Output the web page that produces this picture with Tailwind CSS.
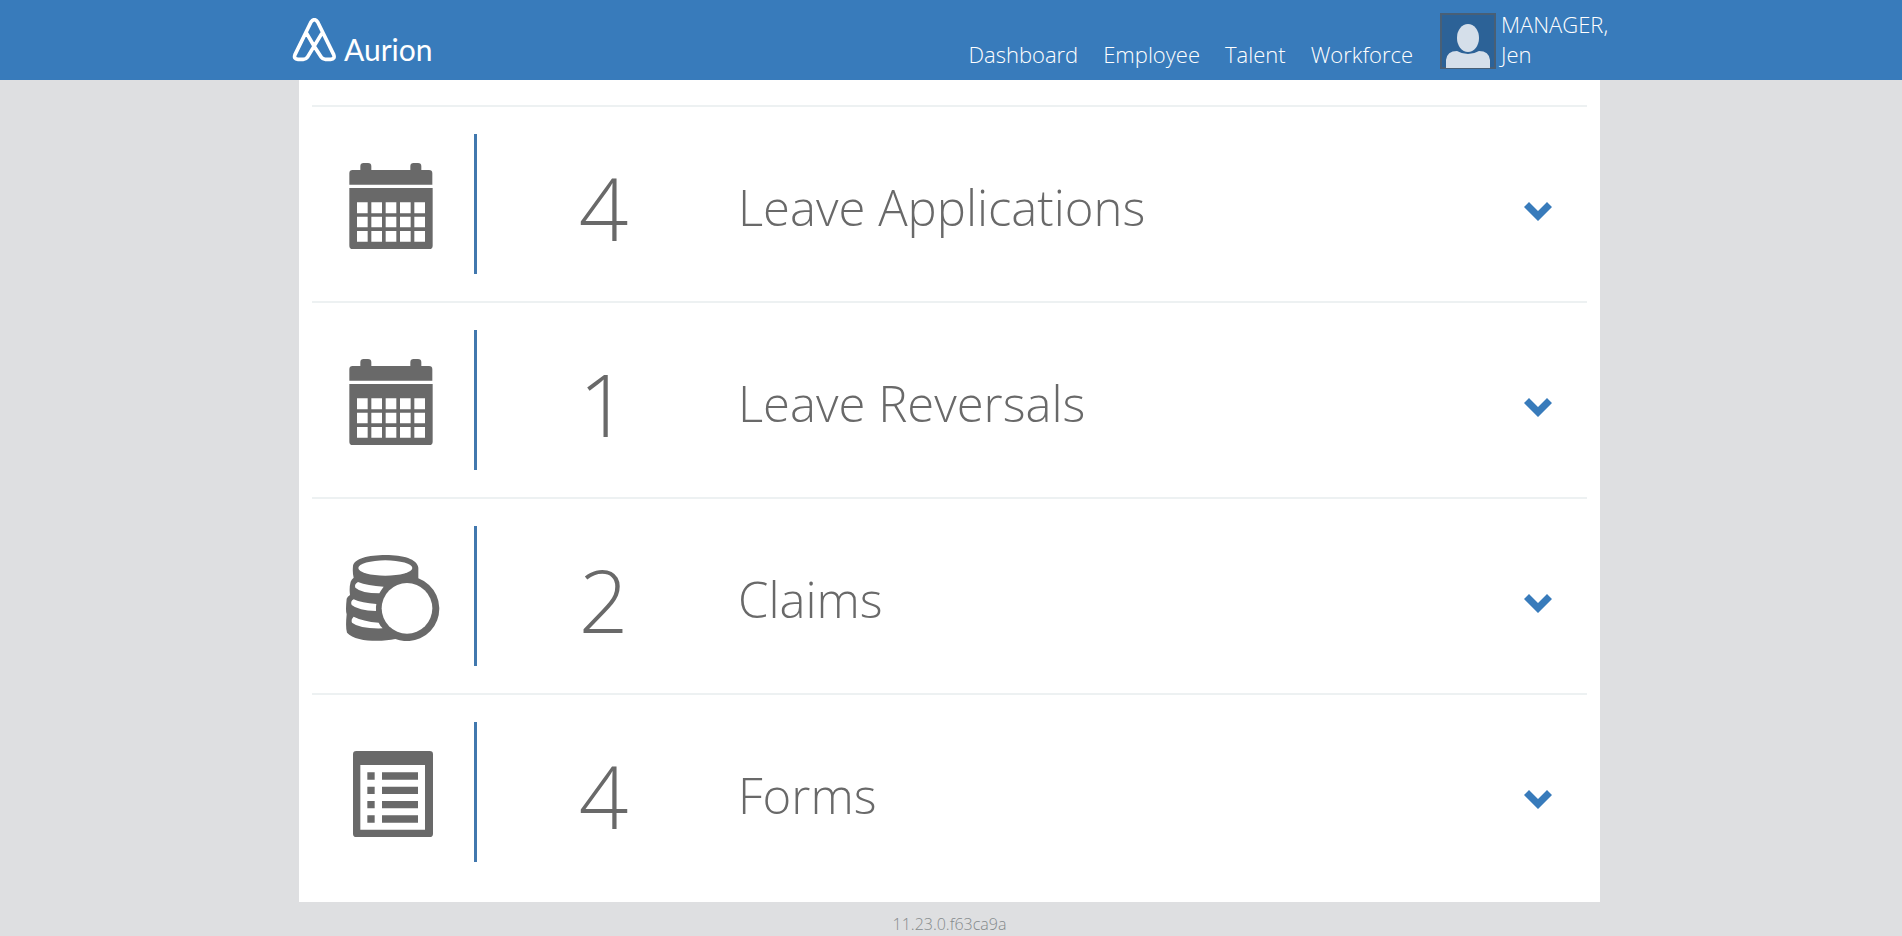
<!DOCTYPE html>
<html lang="en">
<head>
<meta charset="utf-8">
<title>Aurion</title>
<meta name="viewport" content="width=device-width, initial-scale=1">
<script src="https://cdn.jsdelivr.net/npm/@tailwindcss/browser@4"></script>
</head>
<body class="min-h-screen bg-[#dedfe1] font-['Open_Sans',sans-serif] font-light text-[#696969]">
<svg class="hidden" aria-hidden="true">
  <symbol id="calendar" viewBox="0 0 250 258">
    <path fill="currentColor" d="M0 65V31q0-10 10-10h23V10q0-10 10-10h13q10 0 10 10v11h117V10q0-10 10-10h13q10 0 10 10v11h23q10 0 10 10v34z"/>
    <path fill="currentColor" fill-rule="evenodd" d="M0 75H250V248q0 10-10 10H10q-10 0-10-10zM23 118v33h32v-33zm43 0v33h32v-33zm43 0v33h32v-33zm43 0v33h32v-33zm43 0v33h32v-33zM23 161v32h32v-32zm43 0v32h32v-32zm43 0v32h32v-32zm43 0v32h32v-32zm43 0v32h32v-32zM23 204v32h32v-32zm43 0v32h32v-32zm43 0v32h32v-32zm43 0v32h32v-32zm43 0v32h32v-32z"/>
  </symbol>
  <symbol id="chevron" viewBox="0 0 28 19">
    <path fill="currentColor" d="M5 0 14 9 23 0 28 5 14 19 0 5z"/>
  </symbol>
</svg>

<header class="bg-[#387bbb] pr-[3px] text-white">
  <div class="mx-auto flex h-20 max-w-[1315px] items-start justify-between">
    <a href="#" class="flex items-end gap-2 pt-[18px]">
      <svg class="h-11 w-11" viewBox="0 0 132 132" fill="none" stroke="currentColor" stroke-width="11" stroke-linejoin="round" stroke-linecap="round" aria-hidden="true">
        <path d="M66 84 88 118Q92 124 100 124H116Q130 123 125 110L77 12Q67-2 57 12L9 110Q4 123 18 124H34Q42 124 46 118L89 47M66 84 44 46"/>
      </svg>
      <span class="pt-[18px] font-[Lato] text-3xl leading-[26px] font-normal">Aurion</span>
    </a>
    <div class="flex items-start">
      <nav class="flex gap-[25px] pt-[39px] text-[22px] leading-[30px]">
        <a href="#">Dashboard</a>
        <a href="#">Employee</a>
        <a href="#">Talent</a>
        <a href="#">Workforce</a>
      </nav>
      <a href="#" class="ml-[27px] flex pt-[9px] text-[22px] leading-[30px]">
        <svg class="mt-1 mr-[5px] h-14 w-14" viewBox="0 0 56 56" role="img" aria-label="Profile picture">
          <path fill="#2c6297" stroke="#485f76" stroke-width="2" d="M1 1H55V55H1z"/>
          <ellipse cx="28" cy="25" rx="11" ry="14" fill="#d5dfea"/>
          <path fill="#d5dfea" d="M6 55V47Q7 38 17 38Q22 41 28 41T39 38Q49 38 50 47V55z"/>
        </svg>
        <span class="w-[106px]">MANAGER, Jen</span>
      </a>
    </div>
  </div>
</header>

<main class="pr-[3px]">
  <ul class="mx-auto max-w-[1301px] bg-white px-[13px] pt-[25px] pb-[13px]">
    <li class="flex border-t-2 border-[#edf1f2] py-[27px]">
      <div class="flex h-[140px] w-[165px] items-center border-r-3 border-[#4178ae] pt-1 pl-[37px]">
        <svg class="h-[86px] w-[84px]" aria-hidden="true"><use href="#calendar"/></svg>
      </div>
      <div class="flex w-[253px] items-center justify-center pt-[6px] text-[87px] leading-[119px]">4</div>
      <h2 class="flex grow items-center pt-[6px] pl-2 text-[49px] leading-[68px]">Leave Applications</h2>
      <button type="button" aria-label="Expand Leave Applications" class="mr-[35px] self-center pt-[14px] text-[#387bbb]"><svg class="h-[19px] w-7"><use href="#chevron"/></svg></button>
    </li>
    <li class="flex border-t-2 border-[#edf1f2] py-[27px]">
      <div class="flex h-[140px] w-[165px] items-center border-r-3 border-[#4178ae] pt-1 pl-[37px]">
        <svg class="h-[86px] w-[84px]" aria-hidden="true"><use href="#calendar"/></svg>
      </div>
      <div class="flex w-[253px] items-center justify-center pt-[6px] text-[87px] leading-[119px]">1</div>
      <h2 class="flex grow items-center pt-[6px] pl-2 text-[49px] leading-[68px]">Leave Reversals</h2>
      <button type="button" aria-label="Expand Leave Reversals" class="mr-[35px] self-center pt-[14px] text-[#387bbb]"><svg class="h-[19px] w-7"><use href="#chevron"/></svg></button>
    </li>
    <li class="flex border-t-2 border-[#edf1f2] py-[27px]">
      <div class="flex h-[140px] w-[165px] items-center border-r-3 border-[#4178ae] pt-1 pl-[34px]">
        <svg class="h-[86px] w-[94px]" viewBox="48 72 282 258" aria-hidden="true">
          <path fill="currentColor" d="M69 105C72 83 115 72 167 72S262 84 265 110V142A97 97 0 1 1 196 324C150 334 75 332 51 305Q46 290 50 250Q46 240 50 203Q52 197 60 192Q57 170 62 152Q65 144 71 140Q67 125 69 105z"/>
          <ellipse cx="166" cy="111" rx="81" ry="23" fill="white"/>
          <path fill="white" d="M84 153Q112 164 161 167Q154 176 148 187Q95 187 76 170Q72 160 84 153zM71 205Q95 216 139 219Q137 229 138 240Q85 239 65 222Q60 211 71 205zM71 257Q98 271 146 275Q150 284 158 292Q90 294 66 275Q62 265 71 257z"/>
          <circle cx="231" cy="232" r="76" fill="white"/>
        </svg>
      </div>
      <div class="flex w-[253px] items-center justify-center pt-[6px] text-[87px] leading-[119px]">2</div>
      <h2 class="flex grow items-center pt-[6px] pl-2 text-[49px] leading-[68px]">Claims</h2>
      <button type="button" aria-label="Expand Claims" class="mr-[35px] self-center pt-[14px] text-[#387bbb]"><svg class="h-[19px] w-7"><use href="#chevron"/></svg></button>
    </li>
    <li class="flex border-t-2 border-[#edf1f2] py-[27px]">
      <div class="flex h-[140px] w-[165px] items-center border-r-3 border-[#4178ae] pt-1 pl-[41px]">
        <svg class="h-[86px] w-20" viewBox="0 0 240 258" aria-hidden="true">
          <path fill="currentColor" fill-rule="evenodd" d="M10 0H230Q240 0 240 10V248Q240 258 230 258H10Q0 258 0 248V10Q0 0 10 0zM22 42V236H216V42z"/>
          <path fill="currentColor" d="M43 64h22v22H43zm44 0H195v22H87zM43 107h22v22H43zm44 0H195v22H87zM43 150h22v22H43zm44 0H195v22H87zM43 193h22v22H43zm44 0H195v22H87z"/>
        </svg>
      </div>
      <div class="flex w-[253px] items-center justify-center pt-[6px] text-[87px] leading-[119px]">4</div>
      <h2 class="flex grow items-center pt-[6px] pl-2 text-[49px] leading-[68px]">Forms</h2>
      <button type="button" aria-label="Expand Forms" class="mr-[35px] self-center pt-[14px] text-[#387bbb]"><svg class="h-[19px] w-7"><use href="#chevron"/></svg></button>
    </li>
  </ul>
</main>
<footer class="pt-[10px] pr-[3px] text-center text-base text-[#858a8c]">11.23.0.f63ca9a</footer>
</body>
</html>
